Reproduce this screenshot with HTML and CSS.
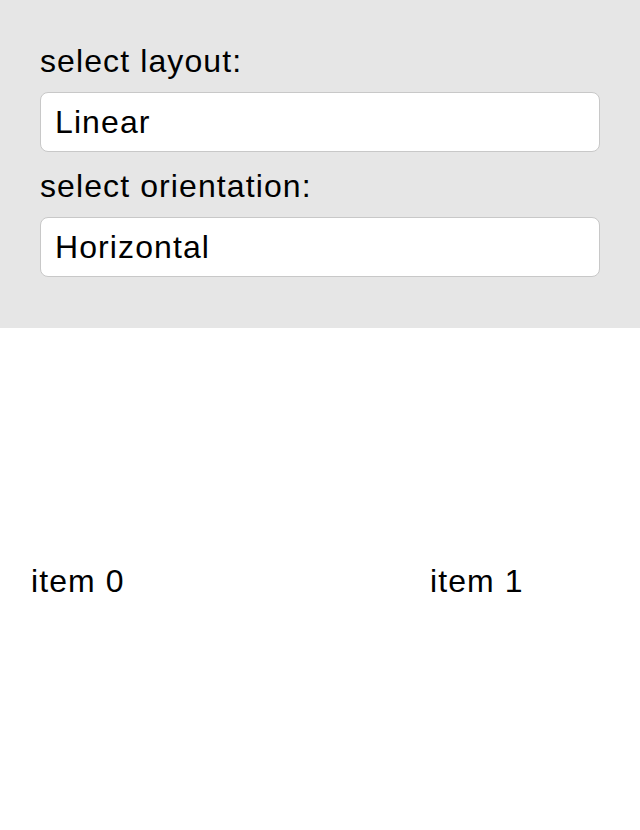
FILE: index.html
```html
<!DOCTYPE html>
<html>
<head>
<meta charset="utf-8">
<link rel="stylesheet" href="styles.css">
</head>
<body>
<div class="controls">
  <div class="label">select layout:</div>
  <div class="field">Linear</div>
  <div class="label label-second">select orientation:</div>
  <div class="field">Horizontal</div>
</div>
<div class="stage">
  <div class="item">item 0</div>
  <div class="item">item 1</div>
</div>
</body>
</html>
```

FILE: styles.css
```css
html, body {
  margin: 0;
  padding: 0;
  background: #ffffff;
}
body {
  font-family: "Liberation Sans", Arial, sans-serif;
  color: #000;
  width: 640px;
  height: 830px;
  display: flex;
  flex-direction: column;
}
.controls {
  background: #e6e6e6;
  height: 328px;
  box-sizing: border-box;
  padding: 43px 40px 0 40px;
}
.label {
  font-size: 32px;
  letter-spacing: 1.1px;
  line-height: 36px;
  height: 36px;
  margin-bottom: 13px;
}
.label-second {
  margin-top: 16px;
  margin-bottom: 13px;
}
.field {
  background: #fff;
  border: 1px solid #c8c8c8;
  border-radius: 8px;
  height: 58px;
  box-sizing: content-box;
  padding: 0 14px;
  font-size: 32px;
  letter-spacing: 1.1px;
  line-height: 58px;
}
.stage {
  flex: 1;
  display: grid;
  grid-template-columns: 399px auto;
  align-items: center;
  padding-left: 31px;
  padding-top: 4px;
}
.item {
  font-size: 32px;
  letter-spacing: 1.1px;
  line-height: 36px;
}
```
